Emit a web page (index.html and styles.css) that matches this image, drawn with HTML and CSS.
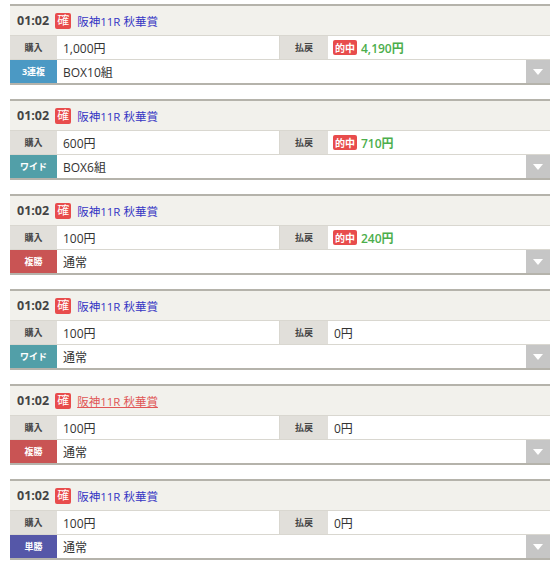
FILE: index.html
```html
<!DOCTYPE html>
<html lang="ja">
<head>
<meta charset="utf-8">
<link rel="stylesheet" href="styles.css">
</head>
<body>
<div class="list">
  <div class="card">
    <div class="head"><span class="time">01:02</span><span class="kaku">確</span><a class="race">阪神11R 秋華賞</a></div>
    <div class="row">
      <div class="lbl">購入</div><div class="val">1,000円</div>
      <div class="lbl lbl-r">払戻</div><div class="val"><span class="hit">的中</span><span class="win">4,190円</span></div>
    </div>
    <div class="row row2">
      <div class="lbl type t-sanren">3連複</div><div class="val wide">BOX10組</div><div class="drop"><span class="tri"></span></div>
    </div>
  </div>

  <div class="card">
    <div class="head"><span class="time">01:02</span><span class="kaku">確</span><a class="race">阪神11R 秋華賞</a></div>
    <div class="row">
      <div class="lbl">購入</div><div class="val">600円</div>
      <div class="lbl lbl-r">払戻</div><div class="val"><span class="hit">的中</span><span class="win">710円</span></div>
    </div>
    <div class="row row2">
      <div class="lbl type t-wide">ワイド</div><div class="val wide">BOX6組</div><div class="drop"><span class="tri"></span></div>
    </div>
  </div>

  <div class="card">
    <div class="head"><span class="time">01:02</span><span class="kaku">確</span><a class="race">阪神11R 秋華賞</a></div>
    <div class="row">
      <div class="lbl">購入</div><div class="val">100円</div>
      <div class="lbl lbl-r">払戻</div><div class="val"><span class="hit">的中</span><span class="win">240円</span></div>
    </div>
    <div class="row row2">
      <div class="lbl type t-fuku">複勝</div><div class="val wide">通常</div><div class="drop"><span class="tri"></span></div>
    </div>
  </div>

  <div class="card">
    <div class="head"><span class="time">01:02</span><span class="kaku">確</span><a class="race">阪神11R 秋華賞</a></div>
    <div class="row">
      <div class="lbl">購入</div><div class="val">100円</div>
      <div class="lbl lbl-r">払戻</div><div class="val">0円</div>
    </div>
    <div class="row row2">
      <div class="lbl type t-wide">ワイド</div><div class="val wide">通常</div><div class="drop"><span class="tri"></span></div>
    </div>
  </div>

  <div class="card">
    <div class="head"><span class="time">01:02</span><span class="kaku">確</span><a class="race race-hover">阪神11R 秋華賞</a></div>
    <div class="row">
      <div class="lbl">購入</div><div class="val">100円</div>
      <div class="lbl lbl-r">払戻</div><div class="val">0円</div>
    </div>
    <div class="row row2">
      <div class="lbl type t-fuku">複勝</div><div class="val wide">通常</div><div class="drop"><span class="tri"></span></div>
    </div>
  </div>

  <div class="card">
    <div class="head"><span class="time">01:02</span><span class="kaku">確</span><a class="race">阪神11R 秋華賞</a></div>
    <div class="row">
      <div class="lbl">購入</div><div class="val">100円</div>
      <div class="lbl lbl-r">払戻</div><div class="val">0円</div>
    </div>
    <div class="row row2">
      <div class="lbl type t-tan">単勝</div><div class="val wide">通常</div><div class="drop"><span class="tri"></span></div>
    </div>
  </div>
</div>
</body>
</html>
```
FILE: styles.css
```css
* { box-sizing: border-box; }
html, body { margin: 0; padding: 0; background: #fff; }
body {
  font-family: "Open Sans", "Noto Sans CJK JP", sans-serif;
  font-size: 12px;
  color: #333;
}
.list {
  padding: 4px 10px 0 10px;
  display: flex;
  flex-direction: column;
  gap: 14px;
}
.card {
  width: 540px;
  border-top: 2px solid #b5b3ab;
  border-bottom: 2px solid #b5b3ab;
  background: #fff;
}
.head {
  height: 30px;
  background: #f2f1ec;
  display: flex;
  align-items: center;
  padding-left: 7px;
  border-bottom: 1px solid #d9d7d0;
}
.time {
  font-weight: bold;
  color: #444;
  font-size: 12.5px;
  margin-right: 6px;
}
.kaku {
  display: inline-flex;
  align-items: center;
  justify-content: center;
  width: 16px;
  height: 16px;
  background: #e84c4c;
  color: #fff;
  font-size: 12px;
  line-height: 1;
  border-radius: 2px;
  margin-right: 6px;
}
.race {
  color: #3535c4;
  font-size: 11.5px;
  text-decoration: none;
}
.race-hover {
  color: #e05555;
  text-decoration: underline;
}
.row {
  display: grid;
  grid-template-columns: 47px 222px 49px 222px;
  height: 24px;
  border-bottom: 1px solid #d9d7d0;
}
.row2 {
  grid-template-columns: 47px 469px 24px;
  border-bottom: none;
  height: 23px;
}
.lbl {
  background: #e1dfda;
  color: #444;
  font-size: 9px;
  font-weight: bold;
  display: flex;
  align-items: center;
  justify-content: center;
}
.lbl-r { border-left: 1px solid #d9d7d0; }
.type { color: #fff; }
.t-sanren { background: #4b99c4; }
.t-wide { background: #529fa8; }
.t-fuku { background: #c95454; }
.t-tan { background: #5557a8; }
.val {
  display: flex;
  align-items: center;
  padding-left: 6px;
  color: #333;
  font-size: 12px;
}
.hit {
  display: inline-flex;
  align-items: center;
  justify-content: center;
  background: #e84c4c;
  color: #fff;
  font-size: 10px;
  font-weight: bold;
  height: 15px;
  padding: 0 2px;
  border-radius: 2px;
  margin-right: 4px;
  margin-left: -1px;
}
.win {
  color: #4cae4c;
  font-weight: 600;
}
.drop {
  background: #c6c6c6;
  display: flex;
  align-items: center;
  justify-content: center;
}
.tri {
  width: 0;
  height: 0;
  border-left: 5px solid transparent;
  border-right: 5px solid transparent;
  border-top: 6px solid #fff;
}
```
